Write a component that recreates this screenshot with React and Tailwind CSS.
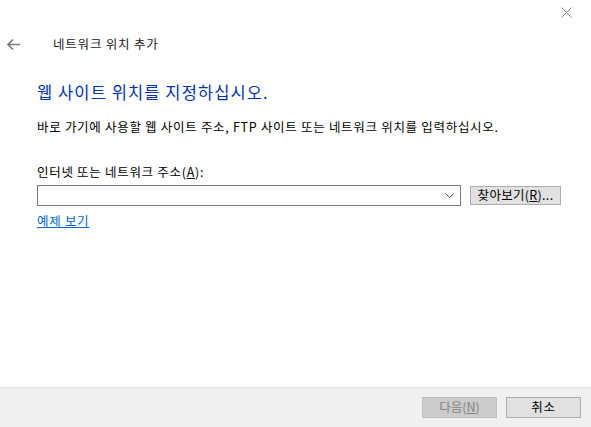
import React from 'react'

const font = { fontFamily: '"Noto Sans CJK KR", "Malgun Gothic", sans-serif' }

const App = () => {
  return (
    <div className="w-[591px] h-[427px] bg-white flex flex-col text-[12.5px] tracking-[0.7px] text-black" style={font}>
      {/* title bar */}
      <div className="h-[30px] flex justify-end">
        <div className="w-[46px] h-[30px] flex items-start justify-center pt-[7px] pr-[4px]">
          <svg width="11" height="11" viewBox="0 0 11 11">
            <path d="M0.5 0.5L10.5 10.5M10.5 0.5L0.5 10.5" stroke="#8a8a8a" strokeWidth="1" />
          </svg>
        </div>
      </div>

      {/* wizard header */}
      <div className="h-[28px] flex items-center">
        <div className="w-[53px] pl-[7px] flex items-center">
          <svg width="13" height="11" viewBox="0 0 13 11">
            <path d="M6 0.5L1 5.5L6 10.5M1 5.5H13" stroke="#7a7a7a" strokeWidth="1.6" fill="none" />
          </svg>
        </div>
        <span className="tracking-[0.8px] text-[#1a1a1a]">네트워크 위치 추가</span>
      </div>

      {/* content */}
      <div className="pl-[37px] flex flex-col">
        <h1 className="mt-[23px] text-[16.5px] tracking-[1.1px] leading-[22px] text-[#0033b0]">웹 사이트 위치를 지정하십시오.</h1>
        <p className="mt-[15px] leading-[18px]">바로 가기에 사용할 웹 사이트 주소, FTP 사이트 또는 네트워크 위치를 입력하십시오.</p>

        <label className="mt-[27px] leading-[18px]">
          인터넷 또는 네트워크 주소(<span className="underline">A</span>):
        </label>
        <div className="mt-[4px] flex items-center">
          <div className="shrink-0 w-[424px] h-[21px] border border-[#7a7a7a] flex items-center justify-end pr-[6px]">
            <svg width="9" height="5" viewBox="0 0 9 5">
              <path d="M0.5 0.5L4.5 4.5L8.5 0.5" stroke="#555" strokeWidth="1" fill="none" />
            </svg>
          </div>
          <button className="shrink-0 ml-[9px] w-[91px] h-[19px] bg-[#e1e1e1] border border-[#adadad] flex items-center justify-center leading-none tracking-[0.3px]">
            찾아보기(<span className="underline">R</span>)...
          </button>
        </div>
        <a className="mt-[6px] w-fit text-[#0066cc] underline leading-[18px] cursor-pointer">예제 보기</a>
      </div>

      <div className="flex-1" />

      {/* footer */}
      <div className="h-[40px] bg-[#f0f0f0] border-t border-[#dfdfdf] flex items-center justify-end gap-[9px] pr-[10px]">
        <button disabled className="w-[75px] h-[21px] bg-[#cccccc] border border-[#bfbfbf] text-[#838383] flex items-center justify-center tracking-normal">
          다음(<span className="underline">N</span>)
        </button>
        <button className="w-[75px] h-[21px] bg-[#e1e1e1] border border-[#adadad] flex items-center justify-center">
          취소
        </button>
      </div>
    </div>
  )
}

export default App
